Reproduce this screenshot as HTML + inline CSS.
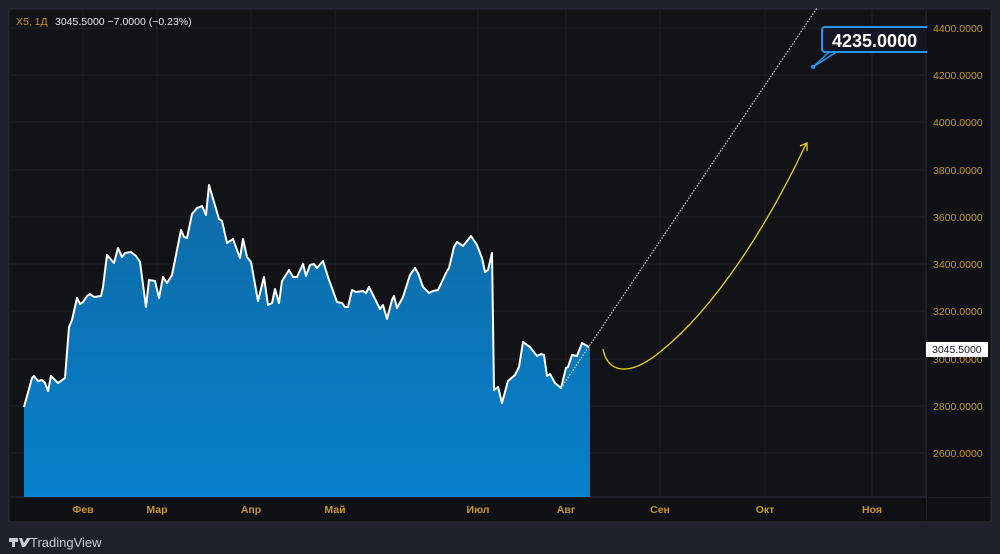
<!DOCTYPE html>
<html><head><meta charset="utf-8"><style>
html,body{margin:0;padding:0;background:#1e222d;width:1000px;height:554px;overflow:hidden}
svg{display:block}
</style></head><body>
<svg width="1000" height="554" viewBox="0 0 1000 554" xmlns="http://www.w3.org/2000/svg" font-family="Liberation Sans, sans-serif">
<defs>
<linearGradient id="g" x1="0" y1="0" x2="0" y2="1">
<stop offset="0" stop-color="#0e6aa5"/><stop offset="1" stop-color="#0781cc"/>
</linearGradient>
</defs>
<rect x="0" y="0" width="1000" height="554" fill="#1e222d"/>
<rect x="9" y="9" width="982" height="513" fill="#0f1114" stroke="#2a2e39" stroke-width="1"/>
<rect x="10" y="10" width="916" height="487" fill="#111317"/>
<g stroke="#1f2228" stroke-width="1">
<line x1="10" y1="28" x2="926" y2="28"/><line x1="10" y1="75" x2="926" y2="75"/>
<line x1="10" y1="122" x2="926" y2="122"/><line x1="10" y1="170" x2="926" y2="170"/>
<line x1="10" y1="217" x2="926" y2="217"/><line x1="10" y1="264" x2="926" y2="264"/>
<line x1="10" y1="311" x2="926" y2="311"/><line x1="10" y1="359" x2="926" y2="359"/>
<line x1="10" y1="406" x2="926" y2="406"/><line x1="10" y1="453" x2="926" y2="453"/>
<line x1="83" y1="10" x2="83" y2="497"/><line x1="157" y1="10" x2="157" y2="497"/>
<line x1="251" y1="10" x2="251" y2="497"/><line x1="335" y1="10" x2="335" y2="497"/>
<line x1="478" y1="10" x2="478" y2="497"/><line x1="566" y1="10" x2="566" y2="497"/>
<line x1="660" y1="10" x2="660" y2="497"/><line x1="765" y1="10" x2="765" y2="497"/>
<line x1="872" y1="10" x2="872" y2="497"/>
</g>
<line x1="10" y1="497" x2="990" y2="497" stroke="#2a2e39"/>
<line x1="926" y1="10" x2="926" y2="521" stroke="#2a2e39"/>
<path id="p" fill="url(#g)" d="M24,497 L24,407 32,378 34,376 38,381 42,380 45,383 48,391 51,376 58,383 65,378 69,327 72,320 77,298 80,304 83,302 87,296 90,294 94,297 101,296 103,287 107,255 114,263 118,248 122,257 125,253 131,252 136,256 140,262 146,307 149,280 155,281 159,298 163,277 167,283 172,275 181,230 184,237 187,238 192,214 197,208 202,206 206,215 209,185 219,219 222,221 227,243 233,239 240,258 243,239 247,257 251,262 258,301 264,277 268,305 272,303 275,289 279,303 282,281 289,270 293,277 297,277 303,264 306,276 310,265 314,264 317,268 323,261 328,277 337,302 342,303 345,307 348,307 352,290 356,292 363,291 366,293 369,287 373,295 380,309 383,305 387,319 392,300 394,296 397,308 403,297 410,275 415,268 418,273 423,287 429,293 433,291 438,290 447,271 449,268 454,247 457,242 463,246 471,236 477,245 482,258 485,272 488,270 492,253 494,390 498,387 502,403 508,381 515,375 519,367 523,342 530,347 537,356 541,354 544,355 547,376 550,374 555,383 561,388 566,368 568,367 572,355 577,356 582,343 589,347 L590,347 L590,497 Z"/>
<polyline fill="none" stroke="#fff" stroke-width="2" stroke-linejoin="round" points="24,407 32,378 34,376 38,381 42,380 45,383 48,391 51,376 58,383 65,378 69,327 72,320 77,298 80,304 83,302 87,296 90,294 94,297 101,296 103,287 107,255 114,263 118,248 122,257 125,253 131,252 136,256 140,262 146,307 149,280 155,281 159,298 163,277 167,283 172,275 181,230 184,237 187,238 192,214 197,208 202,206 206,215 209,185 219,219 222,221 227,243 233,239 240,258 243,239 247,257 251,262 258,301 264,277 268,305 272,303 275,289 279,303 282,281 289,270 293,277 297,277 303,264 306,276 310,265 314,264 317,268 323,261 328,277 337,302 342,303 345,307 348,307 352,290 356,292 363,291 366,293 369,287 373,295 380,309 383,305 387,319 392,300 394,296 397,308 403,297 410,275 415,268 418,273 423,287 429,293 433,291 438,290 447,271 449,268 454,247 457,242 463,246 471,236 477,245 482,258 485,272 488,270 492,253 494,390 498,387 502,403 508,381 515,375 519,367 523,342 530,347 537,356 541,354 544,355 547,376 550,374 555,383 561,388 566,368 568,367 572,355 577,356 582,343 589,347"/>
<line x1="561" y1="388" x2="817" y2="8" stroke="#d8d8d8" stroke-width="1.2" stroke-dasharray="1.5,1.5"/>
<path d="M603,349 C607,372 628,378 660,352 C715,308 768,225 806,144" fill="none" stroke="#e8d21d" stroke-width="1.3"/>
<path d="M800,146 L807,143 L807,151" fill="none" stroke="#e8d21d" stroke-width="1.3"/>
<circle cx="813" cy="67" r="2" fill="#2196f3"/>
<path d="M813,67 L830,51 M813,67 L838,51" stroke="#2196f3" stroke-width="1.5"/>
<rect x="822" y="27" width="110" height="25" rx="3" fill="#131722" stroke="#2196f3" stroke-width="2"/>
<text x="832" y="47" fill="#fff" font-size="18" font-weight="bold">4235.0000</text>
<rect x="927" y="10" width="63" height="487" fill="#0f1114"/>
<rect x="10" y="498" width="916" height="23" fill="#0f1114"/>
<g fill="#c8962c" font-size="10.5">
<text x="933" y="32">4400.0000</text><text x="933" y="79">4200.0000</text>
<text x="933" y="126">4000.0000</text><text x="933" y="174">3800.0000</text>
<text x="933" y="221">3600.0000</text><text x="933" y="268">3400.0000</text>
<text x="933" y="315">3200.0000</text><text x="933" y="363">3000.0000</text>
<text x="933" y="410">2800.0000</text><text x="933" y="457">2600.0000</text>
</g>
<rect x="926" y="342" width="62" height="15" fill="#fff"/>
<text x="932" y="353" fill="#131722" font-size="10.5">3045.5000</text>
<g fill="#c8962c" font-size="10.5" font-weight="bold" text-anchor="middle">
<text x="83" y="513">Фев</text><text x="157" y="513">Мар</text><text x="251" y="513">Апр</text>
<text x="335" y="513">Май</text><text x="478" y="513">Июл</text><text x="566" y="513">Авг</text>
<text x="660" y="513">Сен</text><text x="765" y="513">Окт</text><text x="872" y="513">Ноя</text>
</g>
<text x="16" y="25" font-size="10.5" fill="#c8962c">X5, 1Д</text>
<text x="55" y="25" font-size="10.5" fill="#e8e8e8">3045.5000  −7.0000 (−0.23%)</text>
<g fill="#c8ccd4">
<path d="M9,538 h9 v4 h-3 v5 h-3 v-5 h-3 z"/><path d="M19,538 h3 l2,5 l3,-5 h4 l-6,9 h-3 z"/>
</g>
<text x="30" y="547" font-size="13" fill="#c8ccd4">TradingView</text>
</svg>
</body></html>
